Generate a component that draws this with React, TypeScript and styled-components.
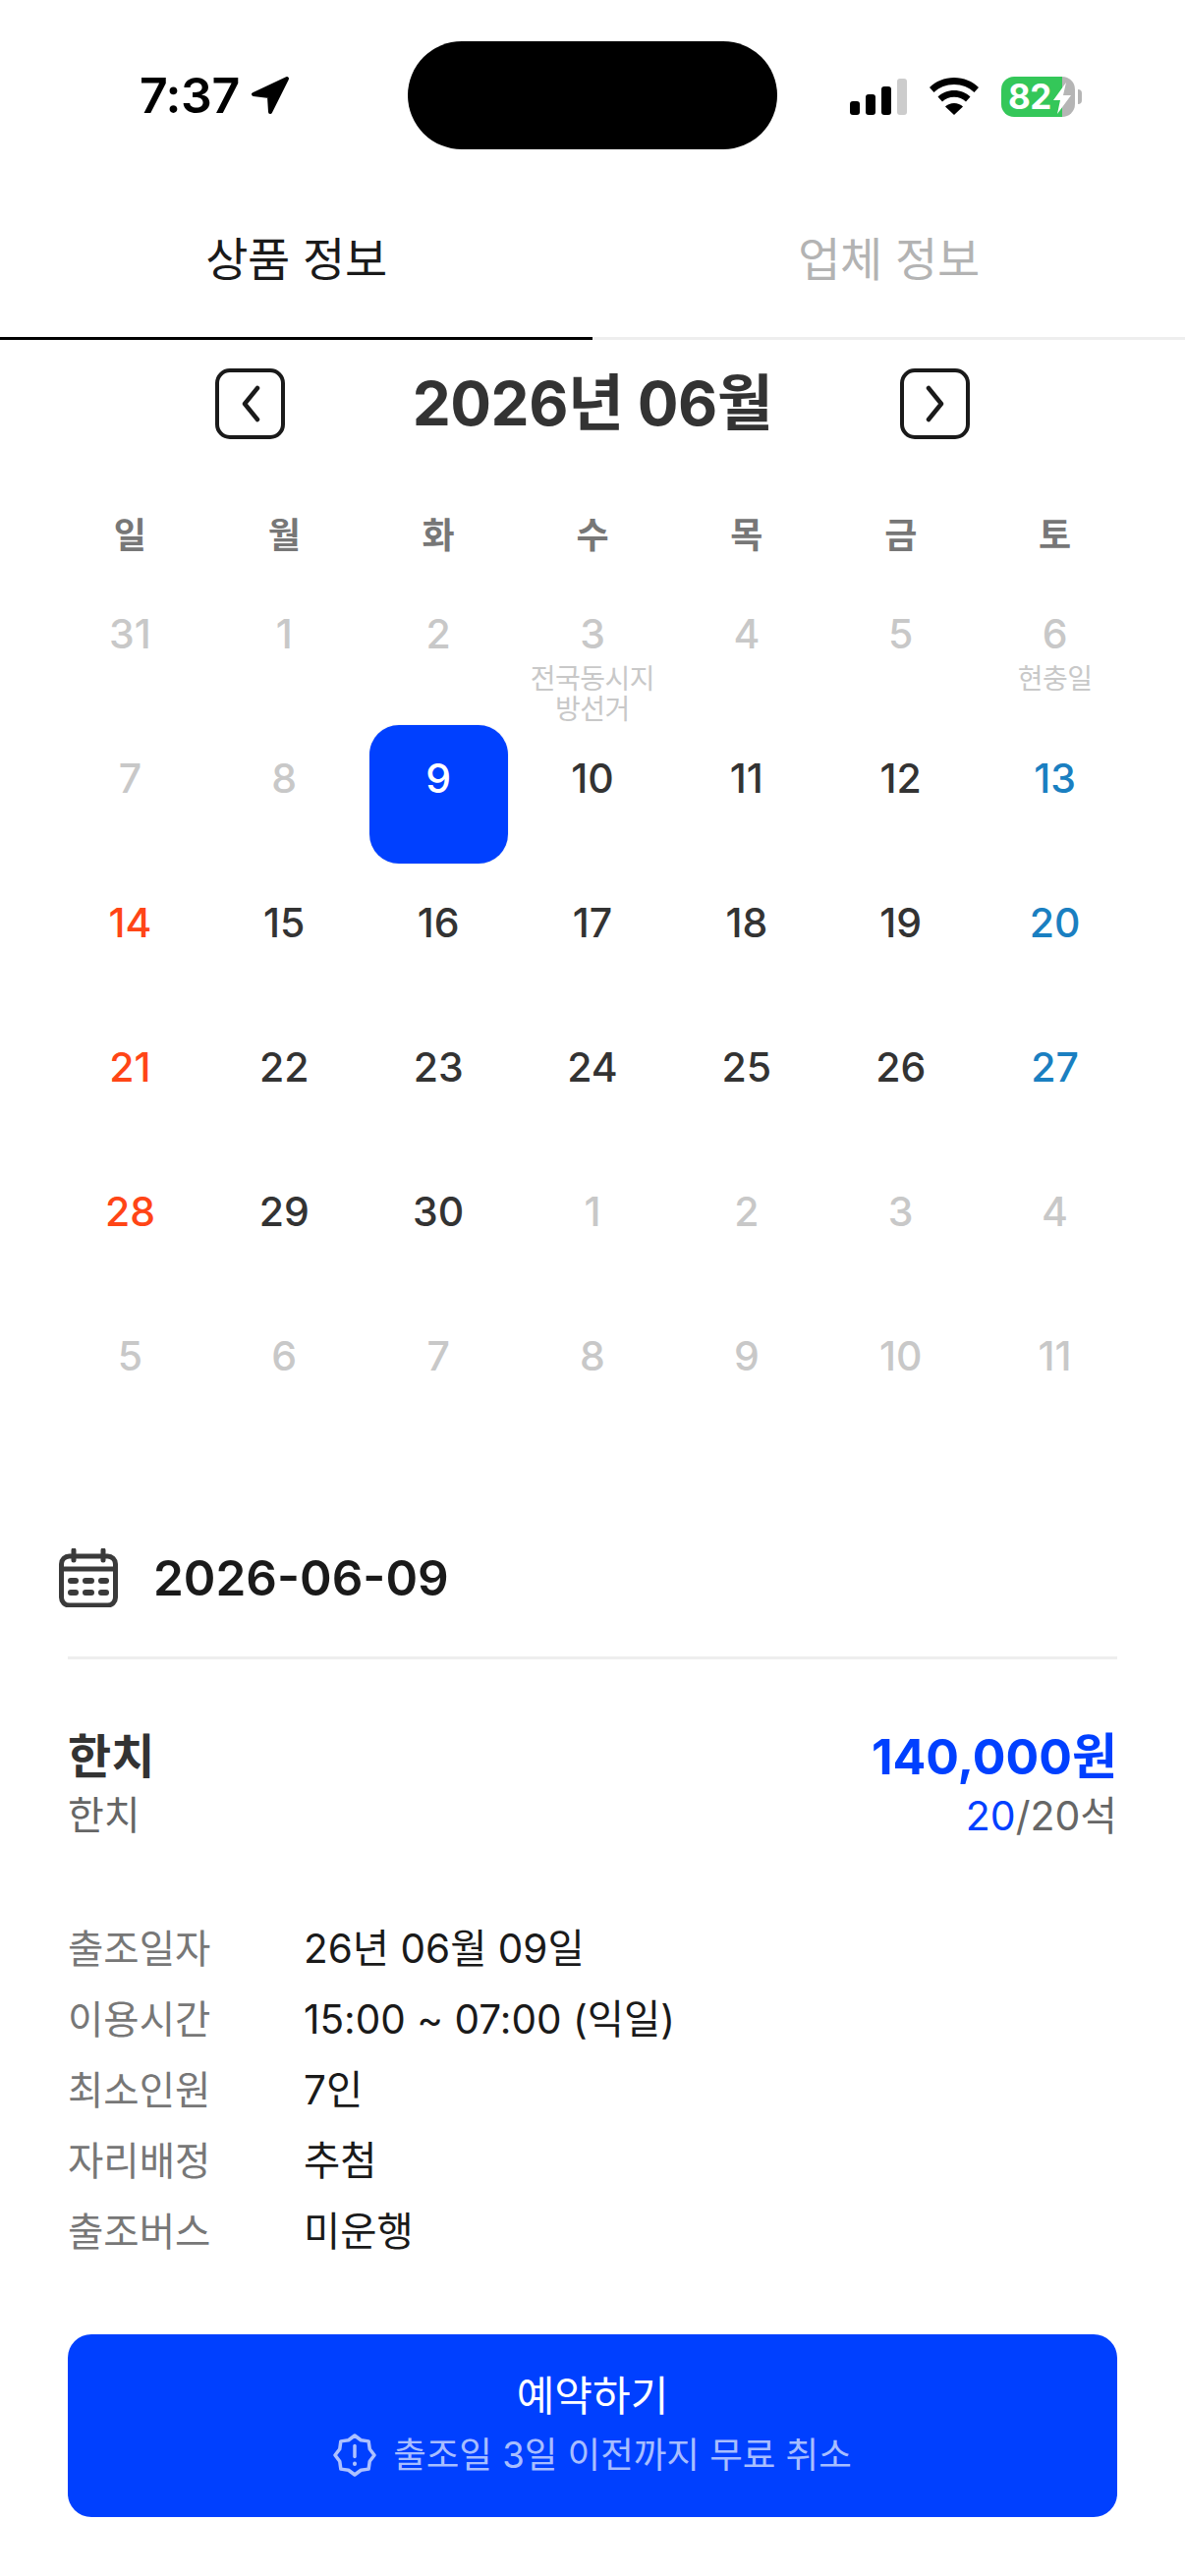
import React from "react";
import styled, { createGlobalStyle } from "styled-components";

const Global = createGlobalStyle`
  html, body { margin: 0; padding: 0; background: #fff; }
  body { font-family: Inter, "Noto Sans CJK KR", sans-serif; }
  * { box-sizing: border-box; }
`;

const Page = styled.div`
  width: 1206px;
  height: 2622px;
  display: flex;
  flex-direction: column;
  background: #fff;
  overflow: hidden;
`;

const StatusBar = styled.div`
  height: 178px;
  padding: 42px 106px 0 142px;
  display: grid;
  grid-template-columns: 273px 376px 1fr;
`;
const TimeGroup = styled.div`
  display: flex;
  align-items: center;
  gap: 11px;
  height: 110px;
  font: 600 50px/1 Inter, sans-serif;
  letter-spacing: -0.5px;
  color: #000;
`;
const Island = styled.div`
  width: 376px;
  height: 110px;
  border-radius: 55px;
  background: #000;
`;
const StatusIcons = styled.div`
  display: flex;
  align-items: center;
  height: 112px;
  padding-left: 74px;
`;
const Battery = styled.div`
  position: relative;
  width: 75px;
  height: 41px;
  margin-left: 22px;
  border-radius: 13px;
  background: linear-gradient(to right, #34c759 0 62px, #b5b5b5 62px);
  color: #fff;
  font: 700 35px/41px Inter, sans-serif;
  padding-left: 7px;
  letter-spacing: -0.5px;
  &::after {
    content: "";
    position: absolute;
    left: 78px;
    top: 13px;
    width: 4px;
    height: 15px;
    border-radius: 0 8px 8px 0;
    background: #b5b5b5;
  }
`;
const BoltIcon = styled.svg`
  position: absolute;
  left: 53px;
  top: 6px;
`;

const Tabs = styled.div`
  display: flex;
  height: 168px;
`;
const Tab = styled.div<{ $active?: boolean }>`
  flex: 1;
  display: flex;
  align-items: center;
  justify-content: center;
  padding-top: 6px;
  border-bottom: 3px solid ${(p) => (p.$active ? "#000" : "#eee")};
  font: 400 47px/1 Inter, "Noto Sans CJK KR", sans-serif;
  letter-spacing: -0.3px;
  color: ${(p) => (p.$active ? "#1a1a1a" : "#b3b3b3")};
`;

const MonthNav = styled.div`
  display: flex;
  align-items: center;
  justify-content: center;
  height: 72px;
  margin-top: 29px;
`;
const NavButton = styled.button`
  width: 71px;
  height: 72px;
  padding: 0;
  display: flex;
  align-items: center;
  justify-content: center;
  background: #fff;
  border: 4px solid #1a1a1a;
  border-radius: 15px;
`;
const MonthTitle = styled.div`
  width: 626px;
  text-align: center;
  font: 700 62px/72px Inter, "Noto Sans CJK KR", sans-serif;
  letter-spacing: -0.5px;
  color: #333;
`;

const Calendar = styled.div`
  display: grid;
  grid-template-columns: repeat(7, 1fr);
  padding: 0 54px;
  margin-top: 80px;
`;
const Weekday = styled.div`
  height: 64px;
  text-align: center;
  font: 700 36px/36px Inter, "Noto Sans CJK KR", sans-serif;
  color: #777;
`;
const tones = {
  muted: "#c8c8c8",
  normal: "#333",
  sun: "#ff4516",
  sat: "#1a7fc1",
  selected: "#fff",
};
type Tone = keyof typeof tones;
const Cell = styled.div<{ $tone: Tone }>`
  height: 147px;
  display: flex;
  flex-direction: column;
  align-items: center;
  padding-top: 36px;
  color: ${(p) => tones[p.$tone]};
  position: relative;
  z-index: 0;
  ${(p) =>
    p.$tone === "selected"
      ? `&::before {
          content: "";
          position: absolute;
          z-index: -1;
          top: 0;
          left: 8px;
          width: 141px;
          height: 141px;
          border-radius: 30px;
          background: #0040ff;
          box-shadow: 0 0 0 1px #f6f6f6;
        }`
      : ""}
`;
const DayNum = styled.div`
  font: 450 41px/36px Inter, sans-serif;
`;
const DayNote = styled.div`
  margin-top: 13px;
  width: 140px;
  text-align: center;
  font: 400 28px/31px Inter, "Noto Sans CJK KR", sans-serif;
  letter-spacing: -0.5px;
  color: #c8c8c8;
`;

const Section = styled.div`
  margin-top: 103px;
  padding: 0 69px;
`;
const DateRow = styled.div`
  display: flex;
  align-items: center;
  height: 60px;
  margin-left: -9px;
  gap: 36px;
  font: 600 49.5px/60px Inter, sans-serif;
  color: #1a1a1a;
`;
const Divider = styled.div`
  height: 3px;
  margin-top: 50px;
  background: #eee;
`;
const Product = styled.div`
  display: grid;
  grid-template-columns: 1fr auto;
  margin-top: 72px;
  row-gap: 6px;
`;
const ProductName = styled.div`
  font: 700 48px/54px Inter, "Noto Sans CJK KR", sans-serif;
  color: #333;
`;
const Price = styled.div`
  font: 700 50px/54px Inter, "Noto Sans CJK KR", sans-serif;
  color: #0040ff;
`;
const ProductSub = styled.div`
  font: 400 40px/54px Inter, "Noto Sans CJK KR", sans-serif;
  color: #666;
`;
const Seats = styled(ProductSub)`
  font-size: 41px;
  text-align: right;
`;
const SeatsLeft = styled.span`
  color: #0040ff;
`;
const Details = styled.div`
  display: grid;
  grid-template-columns: 240px 1fr;
  grid-auto-rows: 72px;
  margin-top: 73px;
  align-items: center;
  font: 400 40.5px/72px Inter, "Noto Sans CJK KR", sans-serif;
`;
const DetailLabel = styled.div`
  font-size: 39.5px;
  color: #777;
`;
const DetailValue = styled.div`
  color: #1a1a1a;
`;
const BookButton = styled.div`
  height: 186px;
  margin-top: 68px;
  border-radius: 24px;
  background: #0040ff;
  display: flex;
  flex-direction: column;
  align-items: center;
  justify-content: center;
  gap: 10px;
  color: #fff;
`;
const BookTitle = styled.div`
  font: 400 42px/50px Inter, "Noto Sans CJK KR", sans-serif;
`;
const BookNote = styled.div`
  display: flex;
  align-items: center;
  gap: 17px;
  font: 400 36.5px/50px Inter, "Noto Sans CJK KR", sans-serif;
  color: rgba(255, 255, 255, 0.68);
`;

const weekdays = ["일", "월", "화", "수", "목", "금", "토"];
type Day = { n: number; tone: Tone; note?: string[] };
const m = (n: number, note?: string[]): Day => ({ n, tone: "muted", note });
const week = (start: number): Day[] => [
  { n: start, tone: "sun" },
  ...[1, 2, 3, 4, 5].map((i) => ({ n: start + i, tone: "normal" as Tone })),
  { n: start + 6, tone: "sat" },
];
const firstWeek: Day[] = [m(31), m(1), m(2), m(3, ["전국동시지", "방선거"]), m(4), m(5), m(6, ["현충일"])];
const secondWeek: Day[] = [
  m(7),
  m(8),
  { n: 9, tone: "selected" },
  { n: 10, tone: "normal" },
  { n: 11, tone: "normal" },
  { n: 12, tone: "normal" },
  { n: 13, tone: "sat" },
];
const lastWeek: Day[] = [
  { n: 28, tone: "sun" },
  { n: 29, tone: "normal" },
  { n: 30, tone: "normal" },
  m(1),
  m(2),
  m(3),
  m(4),
];
const tailWeek: Day[] = [m(5), m(6), m(7), m(8), m(9), m(10), m(11)];
const days = [...firstWeek, ...secondWeek, ...week(14), ...week(21), ...lastWeek, ...tailWeek];

const details = [
  ["출조일자", "26년 06월 09일"],
  ["이용시간", "15:00 ~ 07:00 (익일)"],
  ["최소인원", "7인"],
  ["자리배정", "추첨"],
  ["출조버스", "미운행"],
];

const Chevron = ({ dir }: { dir: "left" | "right" }) => (
  <svg width="26" height="38" viewBox="0 0 26 38" fill="none">
    <path
      d={dir === "left" ? "M20 3 L7 19 L20 35" : "M6 3 L19 19 L6 35"}
      stroke="#1a1a1a"
      strokeWidth="4.500"
      strokeLinecap="round"
      strokeLinejoin="round"
    />
  </svg>
);

const badgePoints = Array.from({ length: 16 }, (_, i) => {
  const angle = (i * Math.PI) / 8 - Math.PI / 2;
  const r = i % 2 === 0 ? 20 : 16.5;
  return `${(22 + r * Math.cos(angle)).toFixed(2)},${(22 + r * Math.sin(angle)).toFixed(2)}`;
}).join(" ");

const WavyBadge = () => (
  <svg width="44" height="44" viewBox="0 0 44 44" fill="none" stroke="currentColor" strokeWidth="3.500">
    <polygon points={badgePoints} strokeLinejoin="round" />
    <path d="M22 12.500v11" strokeLinecap="round" />
    <path d="M22 30.500v.5" strokeLinecap="round" strokeWidth="4" />
  </svg>
);

export default function App() {
  return (
    <Page>
      <Global />
      <StatusBar>
        <TimeGroup>
          7:37
          <svg width="40" height="40" viewBox="0 0 40 40">
            <path
              d="M37 3 L3 19 L19 21 L20 37 Z"
              fill="#000"
              stroke="#000"
              strokeWidth="4"
              strokeLinejoin="round"
            />
          </svg>
        </TimeGroup>
        <Island />
        <StatusIcons>
          <svg width="58" height="37" viewBox="0 0 58 37">
            <rect x="0" y="23" width="10" height="14" rx="3" fill="#000" />
            <rect x="16" y="16" width="10" height="21" rx="3" fill="#000" />
            <rect x="32" y="8" width="10" height="29" rx="3" fill="#000" />
            <rect x="48" y="0" width="10" height="37" rx="3" fill="#ccc" />
          </svg>
          <svg width="52" height="38" viewBox="0 0 52 38" style={{ marginLeft: 22 }}>
            <path
              d="M26 0C16 0 7.500 3.800 1 10l4.500 5C11 9.800 18 7 26 7s15 2.800 20.500 8L51 10C44.500 3.800 36 0 26 0z"
              fill="#000"
            />
            <path
              d="M26 13c-6.500 0-12.300 2.500-16.500 6.500l4.500 5c3-3 7.300-4.800 12-4.800s9 1.800 12 4.800l4.500-5C38.300 15.500 32.500 13 26 13z"
              fill="#000"
            />
            <path d="M26 26c-3.500 0-6.700 1.300-9 3.500L26 38l9-8.500C32.700 27.300 29.500 26 26 26z" fill="#000" />
          </svg>
          <Battery>
            82
            <BoltIcon width="18" height="32" viewBox="0 0 18 32">
              <path d="M13 0 L0 18 L7 18 L4 32 L18 13 L10 13 Z" fill="#fff" />
            </BoltIcon>
          </Battery>
        </StatusIcons>
      </StatusBar>

      <Tabs>
        <Tab $active>상품 정보</Tab>
        <Tab>업체 정보</Tab>
      </Tabs>

      <MonthNav>
        <NavButton aria-label="이전 달">
          <Chevron dir="left" />
        </NavButton>
        <MonthTitle>2026년 06월</MonthTitle>
        <NavButton aria-label="다음 달">
          <Chevron dir="right" />
        </NavButton>
      </MonthNav>

      <Calendar>
        {weekdays.map((w) => (
          <Weekday key={w}>{w}</Weekday>
        ))}
        {days.map((d, i) => (
          <Cell key={i} $tone={d.tone}>
            <DayNum>{d.n}</DayNum>
            {d.note && (
              <DayNote>
                {d.note.map((line) => (
                  <div key={line}>{line}</div>
                ))}
              </DayNote>
            )}
          </Cell>
        ))}
      </Calendar>

      <Section>
        <DateRow>
          <svg width="60" height="60" viewBox="0 0 60 60" fill="none">
            <rect x="2.500" y="8" width="55" height="50" rx="8" stroke="#3a3a3a" strokeWidth="5" />
            <path d="M1 21h58" stroke="#3a3a3a" strokeWidth="5" />
            <path d="M15 2v10M45 2v10" stroke="#3a3a3a" strokeWidth="5" strokeLinecap="round" />
            <path
              d="M12 33h5M27 33h6M43 33h5M12 45h5M27 45h6M43 45h5"
              stroke="#3a3a3a"
              strokeWidth="6"
              strokeLinecap="round"
            />
          </svg>
          2026-06-09
        </DateRow>
        <Divider />
        <Product>
          <ProductName>한치</ProductName>
          <Price>140,000원</Price>
          <ProductSub>한치</ProductSub>
          <Seats>
            <SeatsLeft>20</SeatsLeft>/20석
          </Seats>
        </Product>
        <Details>
          {details.map(([label, value]) => (
            <React.Fragment key={label}>
              <DetailLabel>{label}</DetailLabel>
              <DetailValue>{value}</DetailValue>
            </React.Fragment>
          ))}
        </Details>
        <BookButton>
          <BookTitle>예약하기</BookTitle>
          <BookNote>
            <WavyBadge />
            출조일 3일 이전까지 무료 취소
          </BookNote>
        </BookButton>
      </Section>
    </Page>
  );
}
